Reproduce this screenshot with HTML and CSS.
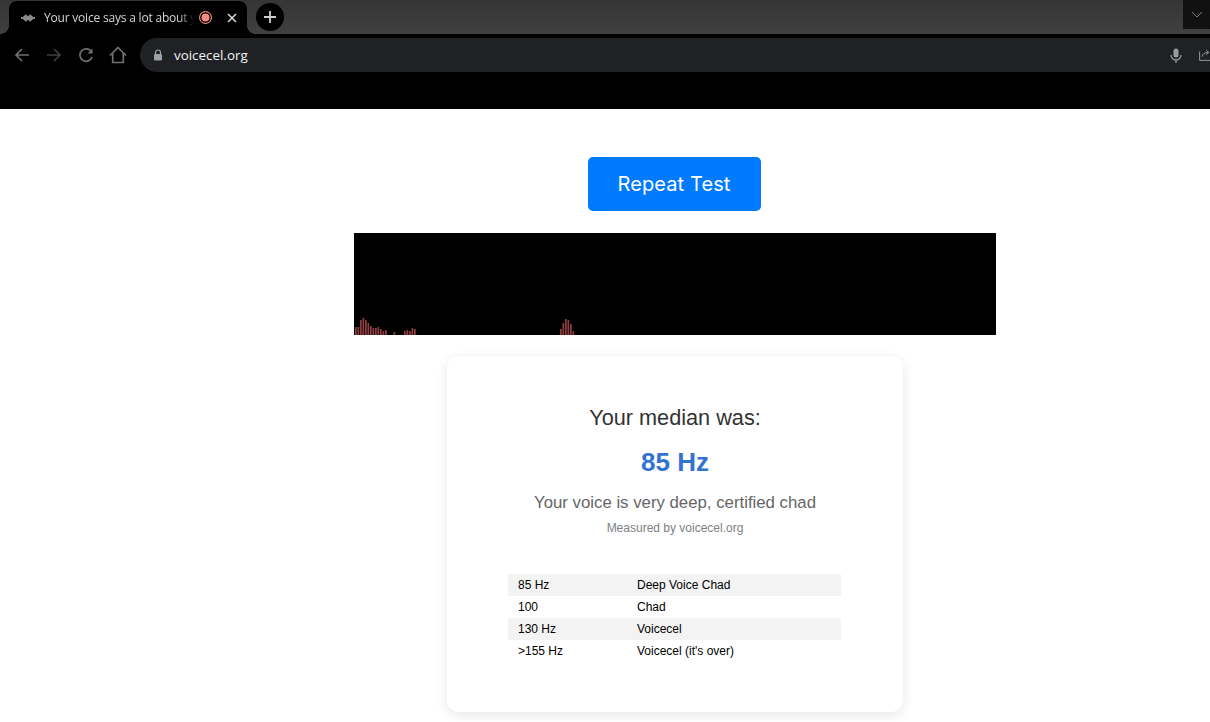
FILE: index.html
```html
<!DOCTYPE html>
<html lang="en">
<head>
<meta charset="utf-8">
<title>Your voice says a lot about you</title>
<link rel="stylesheet" href="styles.css">
</head>
<body>
<header class="chrome">
  <div class="tabstrip">
    <div class="tab">
      <svg class="favicon" width="16" height="12" viewBox="0 0 16 12"><path d="M1 5h2l1-1.500h1L6 2l1.500 2h1L10 2l1 1.500h1l1 1.500h2v2h-2l-1 1.500h-1L10 10 8.500 8h-1L6 10 5 8.500H4L3 7H1z" fill="#8a8a8a"/></svg>
      <span class="tab-title">Your voice says a lot about you</span>
      <span class="rec"></span>
      <svg class="tab-close" width="10" height="10" viewBox="0 0 10 10"><path d="M1 1l8 8M9 1l-8 8" stroke="#d6d6d6" stroke-width="1.6"/></svg>
    </div>
    <div class="newtab"><svg width="14" height="14" viewBox="0 0 14 14"><path d="M7 1v12M1 7h12" stroke="#cfcfcf" stroke-width="1.8"/></svg></div>
    <div class="tabsearch"><svg width="12" height="7" viewBox="0 0 12 7"><path d="M1 1l5 5 5-5" stroke="#7a7a7a" fill="none"/></svg></div>
  </div>
  <div class="toolbar">
    <svg class="nav" width="18" height="18" viewBox="0 0 18 18"><path d="M16 9H3M9 3L3 9l6 6" stroke="#6f7072" stroke-width="1.7" fill="none"/></svg>
    <svg class="nav" width="18" height="18" viewBox="0 0 18 18"><path d="M2 9h13M9 3l6 6-6 6" stroke="#3e3f41" stroke-width="1.7" fill="none"/></svg>
    <svg class="nav" width="18" height="18" viewBox="0 0 18 18"><path d="M14.500 6A6.200 6.200 0 1 0 15 11" stroke="#6f7072" stroke-width="1.700" fill="none"/><path d="M15.500 2.500v5h-5z" fill="#6f7072"/></svg>
    <svg class="nav" width="18" height="18" viewBox="0 0 18 18"><path d="M1 9.500L9 1.500l8 8M3.700 7.500v9h10.600v-9" stroke="#6f7072" stroke-width="1.700" fill="none"/></svg>
    <div class="omnibox">
      <svg width="10" height="12" viewBox="0 0 10 12"><path d="M2.500 5V3.500a2.500 2.500 0 0 1 5 0V5" stroke="#9aa0a6" stroke-width="1.200" fill="none"/><rect x="1" y="5" width="8" height="6.500" rx="1" fill="#9aa0a6"/></svg>
      <span class="url">voicecel.org</span>
      <svg class="mic" width="12" height="15" viewBox="0 0 12 15"><rect x="3.500" y="0.500" width="5" height="9" rx="2.500" fill="#9b9c9e"/><path d="M1 7a5 5 0 0 0 10 0M6 12v3" stroke="#9b9c9e" stroke-width="1.300" fill="none"/></svg>
      <svg class="share" width="14" height="14" viewBox="0 0 14 14"><path d="M0.700 3v10.300H14M3.500 9C4 6 6.500 4 11 4M8.500 1.500L11.500 4 8.500 6.500" stroke="#9b9c9e" stroke-width="1.100" fill="none"/></svg>
    </div>
  </div>
</header>
<main class="page">
  <button class="repeat">Repeat Test</button>
  <svg class="spectrum" width="642" height="102" viewBox="0 0 642 102">
    <g fill="#8f3c40">
      <rect x="1" y="94" width="1.700" height="8"/><rect x="3.500" y="94" width="1.700" height="8"/>
      <rect x="6" y="87" width="1.700" height="15"/><rect x="8.500" y="85" width="1.700" height="17"/>
      <rect x="11" y="87" width="1.700" height="15"/><rect x="13.500" y="90" width="1.700" height="12"/>
      <rect x="16" y="93" width="1.700" height="9"/><rect x="18.500" y="95" width="1.700" height="7"/>
      <rect x="21" y="95" width="1.700" height="7"/><rect x="23.500" y="94" width="1.700" height="8"/>
      <rect x="26" y="96" width="1.700" height="6"/><rect x="28.500" y="98" width="1.700" height="4"/>
      <rect x="31" y="97" width="1.700" height="5"/><rect x="39.500" y="99" width="1.700" height="3"/>
      <rect x="50" y="98" width="1.700" height="4"/><rect x="52.500" y="97" width="1.700" height="5"/>
      <rect x="55" y="98" width="1.700" height="4"/><rect x="57.500" y="95" width="1.700" height="7"/>
      <rect x="60" y="96" width="1.700" height="6"/>
      <rect x="206" y="96" width="1.700" height="6"/><rect x="208.500" y="90" width="1.700" height="12"/>
      <rect x="211" y="86" width="1.700" height="16"/><rect x="213.500" y="87" width="1.700" height="15"/>
      <rect x="216" y="91" width="1.700" height="11"/><rect x="218.500" y="98" width="1.700" height="4"/>
    </g>
  </svg>
  <section class="card">
    <h2 class="median-label">Your median was:</h2>
    <p class="median-value">85 Hz</p>
    <p class="verdict">Your voice is very deep, certified chad</p>
    <p class="measured">Measured by voicecel.org</p>
    <table class="scale">
      <tr><td>85 Hz</td><td>Deep Voice Chad</td></tr>
      <tr><td>100</td><td>Chad</td></tr>
      <tr><td>130 Hz</td><td>Voicecel</td></tr>
      <tr><td>&gt;155 Hz</td><td>Voicecel (it's over)</td></tr>
    </table>
  </section>
</main>
</body>
</html>
```
FILE: styles.css
```css
* { box-sizing: border-box; }
html, body { margin: 0; height: 100%; overflow: hidden; background: #fff; }
body { font-family: "Liberation Sans", Arial, sans-serif; }
.chrome { background: #000; height: 109px; font-family: "Open Sans", "Noto Sans", sans-serif; }
.tabstrip { height: 34px; display: flex; align-items: flex-start; background: linear-gradient(#353535, #404040); }
.tab { position: relative; margin-left: 9px; margin-top: 1px; width: 238px; height: 33px; background: #000; border-radius: 8px 8px 0 0; display: flex; align-items: center; padding: 0 10px 0 11px; }
.tab::before, .tab::after { content: ""; position: absolute; bottom: 0; width: 8px; height: 8px; }
.tab::before { left: -8px; background: radial-gradient(circle at 0 0, transparent 7.500px, #000 8px); }
.tab::after { right: -8px; background: radial-gradient(circle at 100% 0, transparent 7.500px, #000 8px); }
.favicon { flex: none; }
.tab-title { margin-left: 8px; width: 150px; flex: none; white-space: nowrap; overflow: hidden; font-size: 12px; letter-spacing: -0.2px; color: #d4d4d4; -webkit-mask-image: linear-gradient(90deg, #000 90%, transparent); mask-image: linear-gradient(90deg, #000 90%, transparent); }
.rec { flex: none; margin-left: 5px; width: 13px; height: 13px; border-radius: 50%; background: #f28b82; box-shadow: inset 0 0 0 1.500px #000; border: 1px solid #f28b82; }
.tab-close { flex: none; margin-left: 15px; }
.newtab { margin: 3px 0 0 9px; width: 28px; height: 28px; border-radius: 50%; background: #000; display: flex; align-items: center; justify-content: center; }
.tabsearch { margin-left: auto; width: 27px; height: 29px; background: #111; display: flex; align-items: center; justify-content: center; }
.toolbar { height: 38px; display: flex; align-items: center; padding: 4px 0 0 13px; gap: 14px; }
.nav { flex: none; }
.omnibox { flex: 1; margin-left: -1px; height: 34px; background: #202124; border-radius: 17px 0 0 17px; display: flex; align-items: center; padding-left: 13px; }
.url { margin-left: 11px; font-size: 13.400px; color: #f1f3f4; }
.mic { margin-left: auto; }
.share { margin: 0 -1px 0 17px; flex: none; width: 12px; overflow: hidden; }
.page { padding: 48px 0 0 140px; display: flex; flex-direction: column; align-items: center; }
.repeat { width: 173px; height: 54px; margin-right: 2px; border: 0; border-radius: 5px; background: #007bff; color: #fff; font: 400 20px Inter, sans-serif; letter-spacing: .1px; }
.spectrum { display: block; margin-top: 22px; background: #000; }
.card { margin-top: 21px; width: 456px; height: 356px; background: #fff; border-radius: 12px; box-shadow: 0 3px 12px rgba(0,0,0,.1); padding-top: 49px; text-align: center; }
.median-label { margin: 0; font-size: 21.700px; font-weight: 400; line-height: 26px; color: #333; }
.median-value { margin: 16px 0 0; font-size: 26px; font-weight: 700; line-height: 30px; color: #3273d0; }
.verdict { margin: 16px 0 0; font-size: 16.800px; line-height: 20px; color: #666; }
.measured { margin: 8px 0 0; font-size: 12px; line-height: 14px; color: #7d7f84; }
.scale { margin: 39px 0 0 61px; width: 333px; border-collapse: collapse; table-layout: fixed; text-align: left; font-size: 12px; color: #000; }
.scale tr { height: 22px; }
.scale tr:nth-child(odd) { background: #f3f3f3; }
.scale td { padding: 0 0 0 10px; }
.scale td:first-child { width: 119px; }
```
